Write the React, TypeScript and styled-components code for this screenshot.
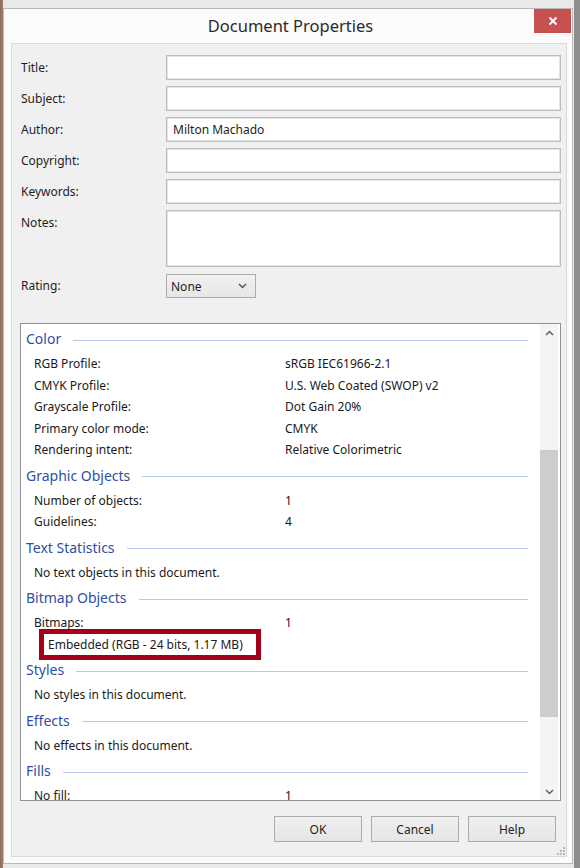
import styled, { createGlobalStyle } from "styled-components";

const GlobalStyle = createGlobalStyle`
  html, body {
    margin: 0;
    padding: 0;
    background: #dedede;
  }
  * {
    box-sizing: border-box;
  }
`

const Screen = styled.div`
  width: 580px;
  height: 868px;
  padding: 8px 7px 4px 3px;
  background: linear-gradient(90deg, #8a6b5a 0px, #a57d6a 3px, #e9e9e9 3px, #e9e9e9 574px, #8d8d8d 574px);
  font-family: "Noto Sans", "Open Sans", sans-serif;
  overflow: hidden;
`

const Window = styled.div`
  height: 100%;
  display: flex;
  flex-direction: column;
  background: #fbfbfb;
  border: 1px solid #b9b9b9;
`

const TitleBar = styled.div`
  display: grid;
  grid-template-columns: 1fr auto 1fr;
  height: 34px;
`

const Title = styled.div`
  grid-column: 2;
  padding-top: 5px;
  padding-left: 5px;
  font-size: 16.5px;
  color: #2b2b2b;
`

const CloseButton = styled.div`
  grid-column: 3;
  justify-self: end;
  width: 37px;
  height: 24px;
  margin-right: 1px;
  background: #c75050;
  color: #fff;
  display: flex;
  align-items: center;
  justify-content: center;
`

const Client = styled.div`
  flex: 1;
  margin: 0 5px 6px 7px;
  background: #f0f0f0;
  border: 1px solid #d9d9d9;
  padding: 11px 0 0 9px;
  display: flex;
  flex-direction: column;
`

const Form = styled.div`
  display: grid;
  grid-template-columns: 145px 1fr;
  row-gap: 6px;
  margin-right: 5px;
`

const Label = styled.div`
  height: 25px;
  line-height: 25px;
  font-size: 12px;
  color: #1e1e1e;
`

const Input = styled.div<{ $tall?: boolean }>`
  height: ${p => (p.$tall ? 57 : 25)}px;
  background: #fff;
  border: 1px solid #bdbdbd;
  box-shadow: inset 0 0 0 1px #e4e4e4;
  padding: 0 6px;
  line-height: 23px;
  font-size: 12px;
  color: #1e1e1e;
`

const Select = styled.div`
  width: 90px;
  height: 24px;
  margin-top: 1px;
  display: flex;
  align-items: center;
  justify-content: space-between;
  padding: 0 8px 0 4px;
  border: 1px solid #acacac;
  background: linear-gradient(#f2f2f2, #e6e6e6);
  font-size: 12px;
  color: #1e1e1e;
`

const Panel = styled.div`
  margin: 25px 5px 0 -1px;
  height: 478px;
  display: flex;
  background: #fff;
  border: 1px solid #8e9298;
`

const List = styled.div`
  flex: 1;
  overflow: hidden;
  font-size: 12px;
  color: #1a1a1a;
`

const SectionHeader = styled.div`
  height: 29px;
  display: flex;
  align-items: center;
  padding: 0 12px 0 5px;
  font-size: 14px;
  color: #2e4fa3;

  &::after {
    content: "";
    flex: 1;
    height: 1px;
    margin: 3px 0 0 12px;
    background: #b8c8e6;
  }
`

const Row = styled.div`
  height: 21.5px;
  display: grid;
  grid-template-columns: 251px 1fr;
  align-items: center;
  padding-left: 13px;
`

const Highlight = styled.div`
  height: 21.5px;
  width: 212px;
  margin-left: 23px;
  padding-left: 4px;
  display: flex;
  align-items: center;
  background: #fff;
  box-shadow: 0 0 0 5px #a3001c;
`

const Scrollbar = styled.div`
  width: 18px;
  margin-right: 2px;
  display: flex;
  flex-direction: column;
  background: #f4f4f4;
`

const ArrowButton = styled.div`
  height: 17px;
  display: flex;
  align-items: center;
  justify-content: center;
  color: #606060;
`

const Track = styled.div`
  flex: 1;
  display: flex;
  flex-direction: column;
`

const Thumb = styled.div<{ $top: number; $size: number }>`
  margin-top: ${p => p.$top}px;
  height: ${p => p.$size}px;
  background: #cdcdcd;
`

const Footer = styled.div`
  flex: 1;
  display: flex;
  justify-content: flex-end;
  padding: 15px 1px 0 0;
`

const ButtonGroup = styled.div`
  display: flex;
  gap: 9px;
`

const Button = styled.div`
  width: 88px;
  height: 26px;
  display: flex;
  align-items: center;
  justify-content: center;
  border: 1px solid #acacac;
  background: linear-gradient(#f0f0f0, #e5e5e5);
  font-size: 12px;
  color: #1e1e1e;
`

const Grip = styled.svg`
  align-self: flex-end;
  margin-bottom: 1px;
`

const Chevron = ({ up }: { up?: boolean }) => (
  <svg width="9" height="6" viewBox="0 0 9 6">
    <path
      d={up ? "M1 5 L4.5 1.5 L8 5" : "M1 1 L4.5 4.5 L8 1"}
      fill="none"
      stroke="currentColor"
      strokeWidth="1.5"
    />
  </svg>
)

type Item = { label: string; value?: string; highlight?: boolean }
type Section = { title: string; items: Item[] }

const sections: Section[] = [
  {
    title: "Color",
    items: [
      { label: "RGB Profile:", value: "sRGB IEC61966-2.1" },
      { label: "CMYK Profile:", value: "U.S. Web Coated (SWOP) v2" },
      { label: "Grayscale Profile:", value: "Dot Gain 20%" },
      { label: "Primary color mode:", value: "CMYK" },
      { label: "Rendering intent:", value: "Relative Colorimetric" },
    ],
  },
  {
    title: "Graphic Objects",
    items: [
      { label: "Number of objects:", value: "1" },
      { label: "Guidelines:", value: "4" },
    ],
  },
  { title: "Text Statistics", items: [{ label: "No text objects in this document." }] },
  {
    title: "Bitmap Objects",
    items: [
      { label: "Bitmaps:", value: "1" },
      { label: "Embedded (RGB - 24 bits, 1.17 MB)", highlight: true },
    ],
  },
  { title: "Styles", items: [{ label: "No styles in this document." }] },
  { title: "Effects", items: [{ label: "No effects in this document." }] },
  { title: "Fills", items: [{ label: "No fill:", value: "1" }] },
]

const fields = ["Title:", "Subject:", "Author:", "Copyright:", "Keywords:"]

function App() {
  return (
    <>
      <GlobalStyle />
      <Screen>
        <Window>
          <TitleBar>
            <Title>Document Properties</Title>
            <CloseButton>
              <svg width="10" height="10" viewBox="0 0 10 10">
                <path d="M1.5 1.5 L8.5 8.5 M8.5 1.5 L1.5 8.5" stroke="#fff" strokeWidth="2" />
              </svg>
            </CloseButton>
          </TitleBar>
          <Client>
            <Form>
              {fields.map(f => (
                <>
                  <Label key={f}>{f}</Label>
                  <Input key={f + "-in"}>{f === "Author:" ? "Milton Machado" : ""}</Input>
                </>
              ))}
              <Label>Notes:</Label>
              <Input $tall />
              <Label>Rating:</Label>
              <Select>
                None
                <span style={{ color: "#555", display: "flex" }}>
                  <Chevron />
                </span>
              </Select>
            </Form>
            <Panel>
              <List>
                {sections.map(s => (
                  <div key={s.title}>
                    <SectionHeader>{s.title}</SectionHeader>
                    {s.items.map(it =>
                      it.highlight ? (
                        <Highlight key={it.label}>{it.label}</Highlight>
                      ) : (
                        <Row key={it.label}>
                          <span>{it.label}</span>
                          <span>{it.value}</span>
                        </Row>
                      )
                    )}
                  </div>
                ))}
              </List>
              <Scrollbar>
                <ArrowButton>
                  <Chevron up />
                </ArrowButton>
                <Track>
                  <Thumb $top={109} $size={267} />
                </Track>
                <ArrowButton>
                  <Chevron />
                </ArrowButton>
              </Scrollbar>
            </Panel>
            <Footer>
              <ButtonGroup>
                <Button>OK</Button>
                <Button>Cancel</Button>
                <Button>Help</Button>
              </ButtonGroup>
              <Grip width="9" height="9" viewBox="0 0 9 9">
                {[
                  [7, 1], [4, 4], [7, 4], [1, 7], [4, 7], [7, 7],
                ].map(([x, y]) => (
                  <rect key={`${x}-${y}`} x={x} y={y} width="2" height="2" fill="#b8b8b8" />
                ))}
              </Grip>
            </Footer>
          </Client>
        </Window>
      </Screen>
    </>
  )
}

export default App
